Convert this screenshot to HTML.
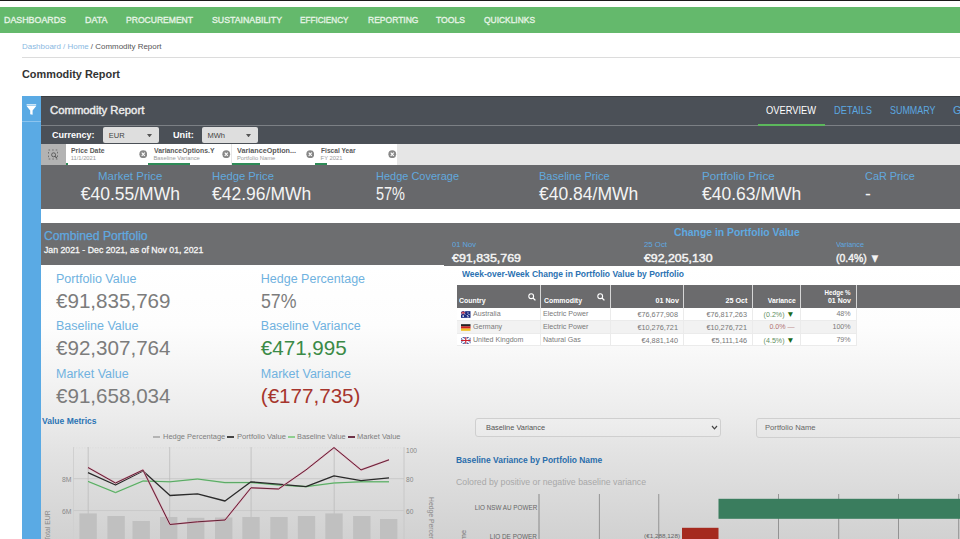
<!DOCTYPE html>
<html><head><meta charset="utf-8"><style>
html,body{margin:0;padding:0;width:960px;height:539px;overflow:hidden;background:#fff;}
body{position:relative;font-family:"Liberation Sans", sans-serif;}
body>div,body>svg{position:absolute;}
.t{white-space:nowrap;}
</style></head><body>
<div style="left:0px;top:0px;width:960px;height:1.2px;background:#1a1a1a;"></div>
<div style="left:0px;top:6.5px;width:960px;height:26px;background:#64b96c;"></div>
<div class="t" style="left:4px;top:15.05px;font-size:9.8px;line-height:9.8px;color:#e6f4e6;font-weight:400;-webkit-text-stroke:0.35px #e6f4e6;transform-origin:left center;transform:scaleX(0.9039);">DASHBOARDS</div>
<div class="t" style="left:85px;top:15.05px;font-size:9.8px;line-height:9.8px;color:#e6f4e6;font-weight:400;-webkit-text-stroke:0.35px #e6f4e6;transform-origin:left center;transform:scaleX(0.9114);">DATA</div>
<div class="t" style="left:126px;top:15.05px;font-size:9.8px;line-height:9.8px;color:#e6f4e6;font-weight:400;-webkit-text-stroke:0.35px #e6f4e6;transform-origin:left center;transform:scaleX(0.8730);">PROCUREMENT</div>
<div class="t" style="left:211.5px;top:15.05px;font-size:9.8px;line-height:9.8px;color:#e6f4e6;font-weight:400;-webkit-text-stroke:0.35px #e6f4e6;transform-origin:left center;transform:scaleX(0.8949);">SUSTAINABILITY</div>
<div class="t" style="left:300px;top:15.05px;font-size:9.8px;line-height:9.8px;color:#e6f4e6;font-weight:400;-webkit-text-stroke:0.35px #e6f4e6;transform-origin:left center;transform:scaleX(0.8326);">EFFICIENCY</div>
<div class="t" style="left:367.5px;top:15.05px;font-size:9.8px;line-height:9.8px;color:#e6f4e6;font-weight:400;-webkit-text-stroke:0.35px #e6f4e6;transform-origin:left center;transform:scaleX(0.8695);">REPORTING</div>
<div class="t" style="left:436px;top:15.05px;font-size:9.8px;line-height:9.8px;color:#e6f4e6;font-weight:400;-webkit-text-stroke:0.35px #e6f4e6;transform-origin:left center;transform:scaleX(0.8780);">TOOLS</div>
<div class="t" style="left:484px;top:15.05px;font-size:9.8px;line-height:9.8px;color:#e6f4e6;font-weight:400;-webkit-text-stroke:0.35px #e6f4e6;transform-origin:left center;transform:scaleX(0.8594);">QUICKLINKS</div>
<div class="t" style="left:21.8px;top:43.45px;font-size:8.1px;line-height:8.1px;color:#555;font-weight:400;transform-origin:left center;transform:scaleX(0.9813);"><span style="color:#8ab9e2">Dashboard / Home</span> / Commodity Report</div>
<div style="left:22px;top:56.6px;width:938px;height:1px;background:#dcdcdc;"></div>
<div class="t" style="left:22px;top:68.71px;font-size:11px;line-height:11px;color:#333;font-weight:700;transform-origin:left center;transform:scaleX(0.9899);">Commodity Report</div>
<div style="left:22px;top:96px;width:19px;height:443px;background:#5aaae4;"></div>
<div style="left:22px;top:121px;width:19px;height:1px;background:#8cc4ee;"></div>
<svg style="position:absolute;left:26px;top:103px" width="11" height="13" viewBox="0 0 11 13"><rect x="0.6" y="1.2" width="9.6" height="1.3" fill="#e8f4fc"/><path d="M0.6 3.1 H10.2 L6.6 7.6 V11.8 L4.2 11.2 V7.6 Z" fill="#fff"/></svg>
<div style="left:41px;top:96px;width:919px;height:47.5px;background:#4b5057;"></div>
<div style="left:41px;top:96px;width:919px;height:1px;background:#3b3e42;"></div>
<div style="left:41px;top:124.5px;width:919px;height:1px;background:#7c8085;"></div>
<div style="left:757.5px;top:123.5px;width:67.5px;height:2px;background:#5cb85c;"></div>
<div class="t" style="left:49.5px;top:105.33px;font-size:10.8px;line-height:10.8px;color:#ececec;font-weight:400;-webkit-text-stroke:0.4px #ececec;transform-origin:left center;transform:scaleX(1.0476);">Commodity Report</div>
<div class="t" style="left:766px;top:105.03px;font-size:10.8px;line-height:10.8px;color:#ffffff;font-weight:400;transform-origin:left center;transform:scaleX(0.8621);">OVERVIEW</div>
<div class="t" style="left:834px;top:105.03px;font-size:10.8px;line-height:10.8px;color:#5ca8e0;font-weight:400;transform-origin:left center;transform:scaleX(0.8597);">DETAILS</div>
<div class="t" style="left:889.5px;top:105.03px;font-size:10.8px;line-height:10.8px;color:#5ca8e0;font-weight:400;transform-origin:left center;transform:scaleX(0.8273);">SUMMARY</div>
<div class="t" style="left:953px;top:105.03px;font-size:10.8px;line-height:10.8px;color:#5ca8e0;font-weight:400;">G</div>
<div class="t" style="left:52px;top:131.04px;font-size:9px;line-height:9px;color:#ffffff;font-weight:700;transform-origin:left center;transform:scaleX(0.9996);">Currency:</div>
<div style="left:103px;top:127.3px;width:55.5px;height:15.5px;background:#dedede;border-radius:2px;"></div>
<div class="t" style="left:108.75px;top:132.12px;font-size:7.5px;line-height:7.5px;color:#444;font-weight:400;">EUR</div>
<svg style="position:absolute;left:147.3px;top:133.6px" width="5" height="3.4" viewBox="0 0 5 3.4"><path d="M0 0H5L2.5 3.4Z" fill="#555"/></svg>
<div class="t" style="left:173px;top:131.04px;font-size:9px;line-height:9px;color:#ffffff;font-weight:700;transform-origin:left center;transform:scaleX(1.0146);">Unit:</div>
<div style="left:202px;top:127.3px;width:56px;height:15.5px;background:#dedede;border-radius:2px;"></div>
<div class="t" style="left:207.5px;top:132.12px;font-size:7.5px;line-height:7.5px;color:#444;font-weight:400;">MWh</div>
<svg style="position:absolute;left:246.3px;top:133.6px" width="5" height="3.4" viewBox="0 0 5 3.4"><path d="M0 0H5L2.5 3.4Z" fill="#555"/></svg>
<div style="left:41px;top:144px;width:919px;height:21px;background:#e6e6e6;"></div>
<div style="left:41px;top:144px;width:24.5px;height:21px;background:#b3b3b3;"></div>
<svg style="position:absolute;left:47px;top:149px" width="13" height="12" viewBox="0 0 13 12"><rect x="1.5" y="1" width="9" height="9" fill="none" stroke="#6a6a6a" stroke-width="0.9" stroke-dasharray="1.6 2"/><circle cx="6.6" cy="5.8" r="2" fill="#b2b2b2" stroke="#555" stroke-width="0.9"/><line x1="8.1" y1="7.3" x2="9.8" y2="9" stroke="#555" stroke-width="1.1"/></svg>
<div style="left:65.5px;top:144px;width:82.20000000000002px;height:20.5px;background:#ffffff;"></div>
<div style="left:65.5px;top:162.8px;width:2.0px;height:2px;background:#2e8b57;"></div>
<div class="t" style="left:70.7px;top:147.13px;font-size:7.4px;line-height:7.4px;color:#5a5a5a;font-weight:700;transform-origin:left center;transform:scaleX(0.9265);">Price Date</div>
<div class="t" style="left:70.7px;top:155.52px;font-size:5.8px;line-height:5.8px;color:#999;font-weight:400;">11/1/2021</div>
<svg style="position:absolute;left:138.70000000000002px;top:149.6px" width="8.5" height="8.5" viewBox="0 0 10 10"><circle cx="5" cy="5" r="4.6" fill="#888"/><path d="M3.2 3.2 L6.8 6.8 M6.8 3.2 L3.2 6.8" stroke="#fff" stroke-width="1.3"/></svg>
<div style="left:148.3px;top:144px;width:82.79999999999998px;height:20.5px;background:#ffffff;"></div>
<div style="left:148.3px;top:162.8px;width:41.69999999999999px;height:2px;background:#2e8b57;"></div>
<div class="t" style="left:153.5px;top:147.13px;font-size:7.4px;line-height:7.4px;color:#5a5a5a;font-weight:700;transform-origin:left center;transform:scaleX(0.9263);">VarianceOptions.Y</div>
<div class="t" style="left:153.5px;top:155.52px;font-size:5.8px;line-height:5.8px;color:#999;font-weight:400;">Baseline Variance</div>
<svg style="position:absolute;left:222.1px;top:149.6px" width="8.5" height="8.5" viewBox="0 0 10 10"><circle cx="5" cy="5" r="4.6" fill="#888"/><path d="M3.2 3.2 L6.8 6.8 M6.8 3.2 L3.2 6.8" stroke="#fff" stroke-width="1.3"/></svg>
<div style="left:231.7px;top:144px;width:83.1px;height:20.5px;background:#ffffff;"></div>
<div style="left:231.7px;top:162.8px;width:27.900000000000034px;height:2px;background:#2e8b57;"></div>
<div class="t" style="left:236.89999999999998px;top:147.13px;font-size:7.4px;line-height:7.4px;color:#5a5a5a;font-weight:700;transform-origin:left center;transform:scaleX(0.9772);">VarianceOption...</div>
<div class="t" style="left:236.89999999999998px;top:155.52px;font-size:5.8px;line-height:5.8px;color:#999;font-weight:400;">Portfolio Name</div>
<svg style="position:absolute;left:305.79999999999995px;top:149.6px" width="8.5" height="8.5" viewBox="0 0 10 10"><circle cx="5" cy="5" r="4.6" fill="#888"/><path d="M3.2 3.2 L6.8 6.8 M6.8 3.2 L3.2 6.8" stroke="#fff" stroke-width="1.3"/></svg>
<div style="left:315.4px;top:144px;width:82.00000000000003px;height:20.5px;background:#ffffff;"></div>
<div style="left:315.4px;top:162.8px;width:11.600000000000023px;height:2px;background:#2e8b57;"></div>
<div class="t" style="left:320.59999999999997px;top:147.13px;font-size:7.4px;line-height:7.4px;color:#5a5a5a;font-weight:700;transform-origin:left center;transform:scaleX(0.8961);">Fiscal Year</div>
<div class="t" style="left:320.59999999999997px;top:155.52px;font-size:5.8px;line-height:5.8px;color:#999;font-weight:400;">FY 2021</div>
<svg style="position:absolute;left:388.4px;top:149.6px" width="8.5" height="8.5" viewBox="0 0 10 10"><circle cx="5" cy="5" r="4.6" fill="#888"/><path d="M3.2 3.2 L6.8 6.8 M6.8 3.2 L3.2 6.8" stroke="#fff" stroke-width="1.3"/></svg>
<div style="left:41px;top:165px;width:919px;height:44px;background:#67686b;"></div>
<div class="t" style="left:98.3px;top:170.91px;font-size:11.8px;line-height:11.8px;color:#62a8de;font-weight:400;transform-origin:left center;transform:scaleX(0.9725);">Market Price</div>
<div class="t" style="left:80.7px;top:185.94px;font-size:17.5px;line-height:17.5px;color:#f4f4f4;font-weight:400;">€40.55/MWh</div>
<div class="t" style="left:212.3px;top:170.91px;font-size:11.8px;line-height:11.8px;color:#62a8de;font-weight:400;transform-origin:left center;transform:scaleX(0.9550);">Hedge Price</div>
<div class="t" style="left:212px;top:185.94px;font-size:17.5px;line-height:17.5px;color:#f4f4f4;font-weight:400;">€42.96/MWh</div>
<div class="t" style="left:376px;top:170.91px;font-size:11.8px;line-height:11.8px;color:#62a8de;font-weight:400;transform-origin:left center;transform:scaleX(0.9305);">Hedge Coverage</div>
<div class="t" style="left:376px;top:185.94px;font-size:17.5px;line-height:17.5px;color:#f4f4f4;font-weight:400;transform-origin:left center;transform:scaleX(0.8278);">57%</div>
<div class="t" style="left:539px;top:170.91px;font-size:11.8px;line-height:11.8px;color:#62a8de;font-weight:400;transform-origin:left center;transform:scaleX(0.9361);">Baseline Price</div>
<div class="t" style="left:539px;top:185.94px;font-size:17.5px;line-height:17.5px;color:#f4f4f4;font-weight:400;">€40.84/MWh</div>
<div class="t" style="left:702px;top:170.91px;font-size:11.8px;line-height:11.8px;color:#62a8de;font-weight:400;transform-origin:left center;transform:scaleX(0.9913);">Portfolio Price</div>
<div class="t" style="left:702px;top:185.94px;font-size:17.5px;line-height:17.5px;color:#f4f4f4;font-weight:400;">€40.63/MWh</div>
<div class="t" style="left:865px;top:170.91px;font-size:11.8px;line-height:11.8px;color:#62a8de;font-weight:400;transform-origin:left center;transform:scaleX(0.9244);">CaR Price</div>
<div class="t" style="left:865px;top:185.94px;font-size:17.5px;line-height:17.5px;color:#f4f4f4;font-weight:400;">-</div>
<div style="left:41px;top:209px;width:919px;height:14.3px;background:#ffffff;"></div>
<div style="left:41px;top:223px;width:403px;height:41.5px;background:#6d6e70;"></div>
<div style="left:443.8px;top:223px;width:516.2px;height:42.3px;background:#6d6e70;"></div>
<div class="t" style="left:44px;top:229.77px;font-size:12.2px;line-height:12.2px;color:#5fa9e0;font-weight:400;-webkit-text-stroke:0.25px #5fa9e0;">Combined Portfolio</div>
<div class="t" style="left:44px;top:245.27px;font-size:9.6px;line-height:9.6px;color:#f6f6f6;font-weight:400;-webkit-text-stroke:0.3px #f6f6f6;transform-origin:left center;transform:scaleX(0.9106);">Jan 2021 - Dec 2021, as of Nov 01, 2021</div>
<div class="t" style="left:674.3px;top:226.65px;font-size:11.5px;line-height:11.5px;color:#5fa9e0;font-weight:700;transform-origin:left center;transform:scaleX(0.9024);">Change in Portfolio Value</div>
<div class="t" style="left:452px;top:241.41px;font-size:7.6px;line-height:7.6px;color:#5fa9e0;font-weight:400;transform-origin:left center;transform:scaleX(0.9974);">01 Nov</div>
<div class="t" style="left:452px;top:251.74px;font-size:11.6px;line-height:11.6px;color:#f4f4f4;font-weight:400;-webkit-text-stroke:0.45px #f4f4f4;transform-origin:left center;transform:scaleX(1.0700);">€91,835,769</div>
<div class="t" style="left:644.3px;top:241.41px;font-size:7.6px;line-height:7.6px;color:#5fa9e0;font-weight:400;transform-origin:left center;transform:scaleX(1.0279);">25 Oct</div>
<div class="t" style="left:644.3px;top:251.94px;font-size:11.6px;line-height:11.6px;color:#f4f4f4;font-weight:400;-webkit-text-stroke:0.45px #f4f4f4;transform-origin:left center;transform:scaleX(1.0623);">€92,205,130</div>
<div class="t" style="left:836px;top:241.41px;font-size:7.6px;line-height:7.6px;color:#5fa9e0;font-weight:400;transform-origin:left center;transform:scaleX(0.9517);">Variance</div>
<div class="t" style="left:836px;top:251.94px;font-size:11.6px;line-height:11.6px;color:#f4f4f4;font-weight:400;-webkit-text-stroke:0.45px #f4f4f4;transform-origin:left center;transform:scaleX(0.9008);">(0.4%) ▼</div>
<div style="left:41px;top:264.5px;width:919px;height:274.5px;background:linear-gradient(#ffffff 0px, #fdfdfd 60px, #f6f6f6 100px, #ececec 150px, #e2e2e2 190px, #d9d9d9 235px, #d1d1d1 274.5px)"></div>
<div style="left:443.8px;top:264.5px;width:516.2px;height:1px;background:#6d6e70;"></div>
<div class="t" style="left:56px;top:272.83px;font-size:12.5px;line-height:12.5px;color:#70b2e0;font-weight:400;">Portfolio Value</div>
<div class="t" style="left:56px;top:290.78px;font-size:20.6px;line-height:20.6px;color:#7c7c7c;font-weight:400;">€91,835,769</div>
<div class="t" style="left:56px;top:320.23px;font-size:12.5px;line-height:12.5px;color:#70b2e0;font-weight:400;">Baseline Value</div>
<div class="t" style="left:56px;top:338.38px;font-size:20.6px;line-height:20.6px;color:#7c7c7c;font-weight:400;">€92,307,764</div>
<div class="t" style="left:56px;top:368.33px;font-size:12.5px;line-height:12.5px;color:#70b2e0;font-weight:400;">Market Value</div>
<div class="t" style="left:56px;top:386.18px;font-size:20.6px;line-height:20.6px;color:#7c7c7c;font-weight:400;">€91,658,034</div>
<div class="t" style="left:260.8px;top:272.83px;font-size:12.5px;line-height:12.5px;color:#70b2e0;font-weight:400;">Hedge Percentage</div>
<div class="t" style="left:260.8px;top:290.78px;font-size:20.6px;line-height:20.6px;color:#7c7c7c;font-weight:400;transform-origin:left center;transform:scaleX(0.8613);">57%</div>
<div class="t" style="left:260.8px;top:320.23px;font-size:12.5px;line-height:12.5px;color:#70b2e0;font-weight:400;">Baseline Variance</div>
<div class="t" style="left:260.8px;top:338.38px;font-size:20.6px;line-height:20.6px;color:#3b8a47;font-weight:400;">€471,995</div>
<div class="t" style="left:260.8px;top:368.33px;font-size:12.5px;line-height:12.5px;color:#70b2e0;font-weight:400;">Market Variance</div>
<div class="t" style="left:260.8px;top:386.18px;font-size:20.6px;line-height:20.6px;color:#a6352d;font-weight:400;">(€177,735)</div>
<div class="t" style="left:462px;top:268.87px;font-size:9.6px;line-height:9.6px;color:#2b72b2;font-weight:700;transform-origin:left center;transform:scaleX(0.8835);">Week-over-Week Change in Portfolio Value by Portfolio</div>
<div style="left:456.5px;top:284.6px;width:503.5px;height:23px;background:#6b6b6d;"></div>
<div style="left:540.4px;top:284.6px;width:1px;height:23px;background:#d6d6d6;"></div>
<div style="left:610.2px;top:284.6px;width:1px;height:23px;background:#d6d6d6;"></div>
<div style="left:683px;top:284.6px;width:1px;height:23px;background:#d6d6d6;"></div>
<div style="left:752.3px;top:284.6px;width:1px;height:23px;background:#d6d6d6;"></div>
<div style="left:800.2px;top:284.6px;width:1px;height:23px;background:#d6d6d6;"></div>
<div style="left:855.6px;top:284.6px;width:1px;height:23px;background:#d6d6d6;"></div>
<div style="left:456.5px;top:307.5px;width:399.1px;height:13.4px;background:#ffffff;"></div>
<div style="left:456.5px;top:320.4px;width:399.1px;height:0.6px;background:#ebebeb;"></div>
<div style="left:456.5px;top:320.9px;width:399.1px;height:12.6px;background:#f2f2f2;"></div>
<div style="left:456.5px;top:333.0px;width:399.1px;height:0.6px;background:#ebebeb;"></div>
<div style="left:456.5px;top:333.5px;width:399.1px;height:12.4px;background:#ffffff;"></div>
<div style="left:456.5px;top:345.4px;width:399.1px;height:0.6px;background:#ebebeb;"></div>
<div style="left:540.4px;top:307.5px;width:0.6px;height:38.5px;background:#ebebeb;"></div>
<div style="left:610.2px;top:307.5px;width:0.6px;height:38.5px;background:#ebebeb;"></div>
<div style="left:683px;top:307.5px;width:0.6px;height:38.5px;background:#ebebeb;"></div>
<div style="left:752.3px;top:307.5px;width:0.6px;height:38.5px;background:#ebebeb;"></div>
<div style="left:800.2px;top:307.5px;width:0.6px;height:38.5px;background:#ebebeb;"></div>
<div style="left:855.6px;top:307.5px;width:0.6px;height:38.5px;background:#ebebeb;"></div>
<div class="t" style="left:459px;top:296.78px;font-size:7px;line-height:7px;color:#ffffff;font-weight:700;transform-origin:left center;transform:scaleX(0.9946);">Country</div>
<div class="t" style="left:543.5px;top:296.78px;font-size:7px;line-height:7px;color:#ffffff;font-weight:700;transform-origin:left center;transform:scaleX(0.9870);">Commodity</div>
<div class="t" style="right:281.5px;text-align:right;top:296.78px;font-size:7px;line-height:7px;color:#ffffff;font-weight:700;transform-origin:right center;transform:scaleX(1.0231);">01 Nov</div>
<div class="t" style="right:212.70000000000005px;text-align:right;top:296.78px;font-size:7px;line-height:7px;color:#ffffff;font-weight:700;transform-origin:right center;transform:scaleX(1.0277);">25 Oct</div>
<div class="t" style="right:164.70000000000005px;text-align:right;top:296.78px;font-size:7px;line-height:7px;color:#ffffff;font-weight:700;transform-origin:right center;transform:scaleX(0.9718);">Variance</div>
<div class="t" style="right:109px;text-align:right;top:288.58px;font-size:7px;line-height:7px;color:#ffffff;font-weight:700;transform-origin:right center;transform:scaleX(0.8795);">Hedge %</div>
<div class="t" style="right:109px;text-align:right;top:297.18px;font-size:7px;line-height:7px;color:#ffffff;font-weight:700;transform-origin:right center;transform:scaleX(1.0014);">01 Nov</div>
<svg style="position:absolute;left:528px;top:292.8px" width="8" height="8" viewBox="0 0 8 8"><circle cx="3.2" cy="3.2" r="2.4" fill="none" stroke="#fff" stroke-width="1.1"/><line x1="5" y1="5" x2="7.4" y2="7.4" stroke="#fff" stroke-width="1.3"/></svg>
<svg style="position:absolute;left:597px;top:292.8px" width="8" height="8" viewBox="0 0 8 8"><circle cx="3.2" cy="3.2" r="2.4" fill="none" stroke="#fff" stroke-width="1.1"/><line x1="5" y1="5" x2="7.4" y2="7.4" stroke="#fff" stroke-width="1.3"/></svg>
<div class="t" style="left:473px;top:310.87px;font-size:7.1px;line-height:7.1px;color:#7a7a7a;font-weight:400;">Australia</div>
<div class="t" style="left:543px;top:310.87px;font-size:7.1px;line-height:7.1px;color:#7a7a7a;font-weight:400;">Electric Power</div>
<div class="t" style="right:282px;text-align:right;top:310.84px;font-size:7.3px;line-height:7.3px;color:#777;font-weight:400;">€76,677,908</div>
<div class="t" style="right:213px;text-align:right;top:310.84px;font-size:7.3px;line-height:7.3px;color:#777;font-weight:400;">€76,817,263</div>
<div class="t" style="right:165.39999999999998px;text-align:right;top:310.87px;font-size:7.1px;line-height:7.1px;color:#5f8f5f;font-weight:400;">(0.2%)<span style="color:#1a6a1a;font-size:8.4px;margin-left:1.8px">▼</span></div>
<div class="t" style="right:109.39999999999998px;text-align:right;top:310.87px;font-size:7.1px;line-height:7.1px;color:#7a7a7a;font-weight:400;">48%</div>
<div class="t" style="left:473px;top:324.27px;font-size:7.1px;line-height:7.1px;color:#7a7a7a;font-weight:400;">Germany</div>
<div class="t" style="left:543px;top:324.27px;font-size:7.1px;line-height:7.1px;color:#7a7a7a;font-weight:400;">Electric Power</div>
<div class="t" style="right:282px;text-align:right;top:324.24px;font-size:7.3px;line-height:7.3px;color:#777;font-weight:400;">€10,276,721</div>
<div class="t" style="right:213px;text-align:right;top:324.24px;font-size:7.3px;line-height:7.3px;color:#777;font-weight:400;">€10,276,721</div>
<div class="t" style="right:165.39999999999998px;text-align:right;top:324.27px;font-size:7.1px;line-height:7.1px;color:#b07070;font-weight:400;">0.0% <span style="color:#c09090">—</span></div>
<div class="t" style="right:109.39999999999998px;text-align:right;top:324.27px;font-size:7.1px;line-height:7.1px;color:#7a7a7a;font-weight:400;">100%</div>
<div class="t" style="left:473px;top:336.87px;font-size:7.1px;line-height:7.1px;color:#7a7a7a;font-weight:400;">United Kingdom</div>
<div class="t" style="left:543px;top:336.87px;font-size:7.1px;line-height:7.1px;color:#7a7a7a;font-weight:400;">Natural Gas</div>
<div class="t" style="right:282px;text-align:right;top:336.84px;font-size:7.3px;line-height:7.3px;color:#777;font-weight:400;">€4,881,140</div>
<div class="t" style="right:213px;text-align:right;top:336.84px;font-size:7.3px;line-height:7.3px;color:#777;font-weight:400;">€5,111,146</div>
<div class="t" style="right:165.39999999999998px;text-align:right;top:336.87px;font-size:7.1px;line-height:7.1px;color:#5f8f5f;font-weight:400;">(4.5%)<span style="color:#1a6a1a;font-size:8.4px;margin-left:1.8px">▼</span></div>
<div class="t" style="right:109.39999999999998px;text-align:right;top:336.87px;font-size:7.1px;line-height:7.1px;color:#7a7a7a;font-weight:400;">79%</div>
<svg style="position:absolute;left:461.1px;top:310.8px" width="9.5" height="7" viewBox="0 0 10 7"><rect width="10" height="7" fill="#1a2a80"/><rect width="4.6" height="3.4" fill="#2a3f8f"/><path d="M0 0L4.6 3.4M4.6 0L0 3.4" stroke="#fff" stroke-width="0.8"/><path d="M2.3 0V3.4M0 1.7H4.6" stroke="#d03040" stroke-width="0.9"/><circle cx="7.3" cy="1.8" r="0.6" fill="#fff"/><circle cx="8.4" cy="3.6" r="0.6" fill="#fff"/><circle cx="6.6" cy="4.6" r="0.6" fill="#fff"/><circle cx="7.4" cy="5.9" r="0.7" fill="#fff"/><circle cx="2.3" cy="5.2" r="0.9" fill="#fff"/></svg>
<svg style="position:absolute;left:461.1px;top:324px" width="9.5" height="7" viewBox="0 0 10 7"><rect width="10" height="2.4" fill="#222"/><rect y="2.3" width="10" height="2.4" fill="#d02020"/><rect y="4.6" width="10" height="2.4" fill="#f0c020"/></svg>
<svg style="position:absolute;left:461.1px;top:336.6px" width="9.5" height="7" viewBox="0 0 10 7"><rect width="10" height="7" fill="#2a3f8f"/><path d="M0 0L10 7M10 0L0 7" stroke="#fff" stroke-width="1.5"/><path d="M5 0V7M0 3.5H10" stroke="#fff" stroke-width="2.2"/><path d="M5 0V7M0 3.5H10" stroke="#c8202f" stroke-width="1.2"/></svg>
<div class="t" style="left:41.5px;top:416.57px;font-size:8.8px;line-height:8.8px;color:#2c74b4;font-weight:700;transform-origin:left center;transform:scaleX(0.9692);">Value Metrics</div>
<div style="left:153.3px;top:436.2px;width:7.0px;height:1.8px;background:#b4b4b4;"></div>
<div class="t" style="left:162.8px;top:433.31px;font-size:7.6px;line-height:7.6px;color:#7e7e7e;font-weight:400;transform-origin:left center;transform:scaleX(0.9822);">Hedge Percentage</div>
<div style="left:226.7px;top:436.2px;width:7.800000000000011px;height:1.8px;background:#444;"></div>
<div class="t" style="left:236.7px;top:433.31px;font-size:7.6px;line-height:7.6px;color:#7e7e7e;font-weight:400;transform-origin:left center;transform:scaleX(1.0035);">Portfolio Value</div>
<div style="left:288.2px;top:436.2px;width:7.199999999999989px;height:1.8px;background:#8fcf8f;"></div>
<div class="t" style="left:297px;top:433.31px;font-size:7.6px;line-height:7.6px;color:#7e7e7e;font-weight:400;transform-origin:left center;transform:scaleX(0.9719);">Baseline Value</div>
<div style="left:347.6px;top:436.2px;width:7.699999999999989px;height:1.8px;background:#6e3348;"></div>
<div class="t" style="left:357.2px;top:433.31px;font-size:7.6px;line-height:7.6px;color:#7e7e7e;font-weight:400;transform-origin:left center;transform:scaleX(0.9844);">Market Value</div>
<svg style="position:absolute;left:0;top:0" width="960" height="539"><line x1="73.5" y1="447" x2="73.5" y2="539" stroke="#d0d0d0" stroke-width="1"/><line x1="404" y1="447" x2="404" y2="539" stroke="#c8c8c8" stroke-width="1"/><line x1="73.5" y1="447.8" x2="404" y2="447.8" stroke="#d8d8d8" stroke-width="0.7" stroke-dasharray="1.2 1.5"/><line x1="73.5" y1="478.7" x2="404" y2="478.7" stroke="#c4c4c4" stroke-width="0.8"/><line x1="73.5" y1="510.6" x2="404" y2="510.6" stroke="#c4c4c4" stroke-width="0.8"/><line x1="88.2" y1="447" x2="88.2" y2="539" stroke="#bdbdbd" stroke-width="0.8"/><line x1="169.7" y1="447" x2="169.7" y2="539" stroke="#bdbdbd" stroke-width="0.8"/><line x1="251.1" y1="447" x2="251.1" y2="539" stroke="#bdbdbd" stroke-width="0.8"/><line x1="334.2" y1="447" x2="334.2" y2="539" stroke="#bdbdbd" stroke-width="0.8"/><rect x="79.4" y="513.4" width="17.4" height="25.600000000000023" fill="#c0c0c0"/><rect x="107.4" y="516" width="17.4" height="23" fill="#c0c0c0"/><rect x="132.5" y="521" width="17.4" height="18" fill="#c0c0c0"/><rect x="160" y="517" width="17.4" height="22" fill="#c0c0c0"/><rect x="187" y="517.8" width="17.4" height="21.200000000000045" fill="#c0c0c0"/><rect x="215" y="517.5" width="17.4" height="21.5" fill="#c0c0c0"/><rect x="242.3" y="517" width="17.4" height="22" fill="#c0c0c0"/><rect x="270.3" y="517" width="17.4" height="22" fill="#c0c0c0"/><rect x="297.8" y="516" width="17.4" height="23" fill="#c0c0c0"/><rect x="325.3" y="513.4" width="17.4" height="25.600000000000023" fill="#c0c0c0"/><rect x="353.1" y="516" width="17.4" height="23" fill="#c0c0c0"/><rect x="380" y="519" width="17.4" height="20" fill="#c0c0c0"/><polyline points="88,481.4 115.5,492.6 143,481 170,481.8 197.5,479 225,482.6 251,482.5 278.5,485 306,486.6 334,483 361,481.8 389,481.8" fill="none" stroke="#a8dca8" stroke-width="1.6" stroke-linejoin="round"/><polyline points="88,481.4 115.5,492.6 143,481 170,481.8 197.5,479 225,482.6 251,482.5 278.5,485 306,486.6 334,483 361,481.8 389,481.8" fill="none" stroke="#4f9f5c" stroke-width="0.9" stroke-linejoin="round"/><polyline points="88,472.7 115.5,485 143,471 170,495.5 197.5,493.8 225,501 251,481.8 278.5,484.2 306,486.6 334,475.8 361,480.6 389,477.8" fill="none" stroke="#2a2a2a" stroke-width="1.3" stroke-linejoin="round"/><polyline points="88,467.5 115.5,483 143,470 170,524.5 197.5,521.8 225,520 251,487.8 278.5,489 306,469.9 334,447.6 361,469.9 389,459.8" fill="none" stroke="#dc98ae" stroke-width="1.7" stroke-linejoin="round"/><polyline points="88,467.5 115.5,483 143,470 170,524.5 197.5,521.8 225,520 251,487.8 278.5,489 306,469.9 334,447.6 361,469.9 389,459.8" fill="none" stroke="#622436" stroke-width="1.0" stroke-linejoin="round"/></svg>
<div class="t" style="right:888.8px;text-align:right;top:476.50px;font-size:6.8px;line-height:6.8px;color:#8a8a8a;font-weight:400;transform-origin:right center;transform:scaleX(1.0050);">8M</div>
<div class="t" style="right:888.8px;text-align:right;top:508.50px;font-size:6.8px;line-height:6.8px;color:#8a8a8a;font-weight:400;transform-origin:right center;transform:scaleX(1.0050);">6M</div>
<div class="t" style="left:406px;top:447.52px;font-size:6.6px;line-height:6.6px;color:#888;font-weight:400;">100</div>
<div class="t" style="left:406px;top:476.72px;font-size:6.6px;line-height:6.6px;color:#888;font-weight:400;">80</div>
<div class="t" style="left:406px;top:508.72px;font-size:6.6px;line-height:6.6px;color:#888;font-weight:400;">60</div>
<div class="t" style="left:43.5px;top:541px;width:80px;height:8px;font-size:6.8px;line-height:8px;color:#888;transform-origin:0 0;transform:rotate(-90deg);text-align:left">Total EUR</div>
<div class="t" style="left:434.7px;top:497px;width:80px;height:8px;font-size:6.8px;line-height:8px;color:#888;transform-origin:0 0;transform:rotate(90deg);text-align:left">Hedge Percentage</div>
<div style="left:475.3px;top:418.4px;width:244px;height:17px;border:0.8px solid #cfcfcf;border-radius:3px;background:rgba(255,255,255,0.15)"></div>
<div class="t" style="left:486px;top:423.65px;font-size:7.2px;line-height:7.2px;color:#555;font-weight:400;transform-origin:left center;transform:scaleX(1.0278);">Baseline Variance</div>
<svg style="position:absolute;left:711px;top:425px" width="7" height="5" viewBox="0 0 7 5"><path d="M1 1 L3.5 3.8 L6 1" fill="none" stroke="#444" stroke-width="1.2"/></svg>
<div style="left:755.5px;top:418px;width:220px;height:17.5px;border:0.8px solid #cfcfcf;border-radius:3px;"></div>
<div class="t" style="left:765px;top:423.53px;font-size:7.4px;line-height:7.4px;color:#666;font-weight:400;transform-origin:left center;transform:scaleX(1.0329);">Portfolio Name</div>
<div class="t" style="left:456.25px;top:455.99px;font-size:8.6px;line-height:8.6px;color:#2a6eac;font-weight:700;transform-origin:left center;transform:scaleX(0.9814);">Baseline Variance by Portfolio Name</div>
<div class="t" style="left:456px;top:477.58px;font-size:8.7px;line-height:8.7px;color:#a8a8a8;font-weight:400;transform-origin:left center;transform:scaleX(1.0036);">Colored by positive or negative baseline variance</div>
<svg style="position:absolute;left:0;top:0" width="960" height="539"><line x1="539" y1="494" x2="539" y2="539" stroke="#777" stroke-width="0.8"/><line x1="599.4" y1="494" x2="599.4" y2="539" stroke="#777" stroke-width="0.7"/><line x1="658.75" y1="494" x2="658.75" y2="539" stroke="#777" stroke-width="0.7"/><line x1="778.5" y1="494" x2="778.5" y2="539" stroke="#777" stroke-width="0.7"/><line x1="838.7" y1="494" x2="838.7" y2="539" stroke="#777" stroke-width="0.7"/><line x1="898.5" y1="494" x2="898.5" y2="539" stroke="#777" stroke-width="0.7"/><line x1="958.7" y1="494" x2="958.7" y2="539" stroke="#777" stroke-width="0.7"/><rect x="718.5" y="498.8" width="242" height="20" fill="#3a7d5e"/><rect x="682" y="527.8" width="36.5" height="12" fill="#a52a1f"/></svg>
<div class="t" style="right:423px;text-align:right;top:504.80px;font-size:6.8px;line-height:6.8px;color:#666;font-weight:400;transform-origin:right center;transform:scaleX(0.9296);">LIO NSW AU POWER</div>
<div class="t" style="right:423px;text-align:right;top:533.50px;font-size:6.8px;line-height:6.8px;color:#666;font-weight:400;transform-origin:right center;transform:scaleX(0.9427);">LIO DE POWER</div>
<div class="t" style="right:280px;text-align:right;top:532.59px;font-size:6px;line-height:6px;color:#666;font-weight:400;transform-origin:right center;transform:scaleX(1.0579);">(€1,288,128)</div>
<div class="t" style="left:460.3px;top:610px;width:80px;height:8px;font-size:7.4px;line-height:8px;color:#7a7a7a;transform-origin:0 0;transform:rotate(-90deg);text-align:right">Portfolio Name</div>
</body></html>
